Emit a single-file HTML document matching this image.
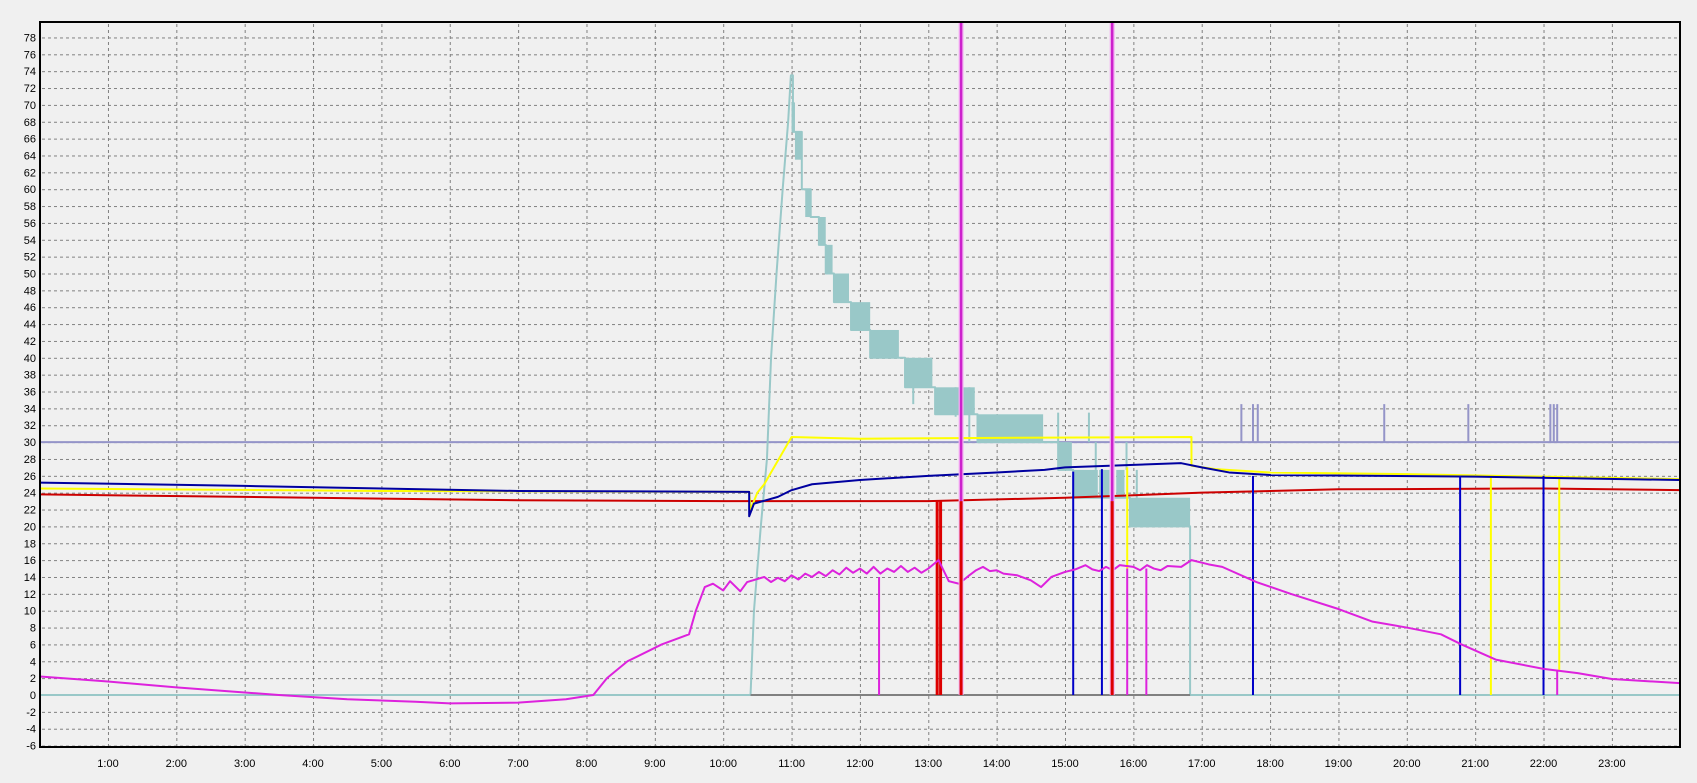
<!DOCTYPE html>
<html><head><meta charset="utf-8"><style>
html,body{margin:0;padding:0;background:#f0f0f0;}
svg{display:block;font-family:"Liberation Sans",sans-serif;font-size:11px;}
</style></head><body>
<svg width="1697" height="783" viewBox="0 0 1697 783" xmlns="http://www.w3.org/2000/svg">
<defs>
<pattern id="hg" x="0" y="695" width="1697" height="16.86" patternUnits="userSpaceOnUse">
<line x1="0" y1="0.5" x2="1697" y2="0.5" stroke="#808080" stroke-width="1" stroke-dasharray="3,3"/>
</pattern>
<pattern id="vg" x="39.6" y="0" width="68.36" height="783" patternUnits="userSpaceOnUse">
<line x1="0.5" y1="0" x2="0.5" y2="783" stroke="#808080" stroke-width="1" stroke-dasharray="3,3"/>
</pattern>
<clipPath id="cp"><rect x="40" y="22" width="1640" height="725"/></clipPath>
</defs>
<rect width="1697" height="783" fill="#f0f0f0"/>
<rect x="41" y="23" width="1638" height="723" fill="url(#hg)"/>
<rect x="41" y="23" width="1638" height="723" fill="url(#vg)"/>
<g clip-path="url(#cp)">
<g transform="translate(39.6 695) scale(68.36 -8.43)" fill="none" stroke-linejoin="round">
<path vector-effect="non-scaling-stroke" stroke="#9494c8" stroke-width="2" d="M0 30H24"/>
<path vector-effect="non-scaling-stroke" stroke="#9494c8" stroke-width="2" d="M17.58 30V34.5M17.75 30V34.5M17.82 30V34.5M19.67 30V34.5M20.9 30V34.5M22.1 30V34.5M22.15 30V34.5M22.2 30V34.5"/>
<path vector-effect="non-scaling-stroke" stroke="#99c8c8" stroke-width="2" d="M0 0H10.4L10.45 10L10.55 20L10.64 28L10.7 40L10.78 50L10.87 60L10.95 68L10.99 73.5H11.02V66.8H11.15V60H11.28V56.7H11.4V53.4H11.5V50H11.62V46.6H11.87V43.3H12.15V40H12.66V36.5H13.1V33.3H13.72V30H14.9V26.7H15.12V23.4H15.95V20H16.83V0H24"/>
<g fill="#99c8c8" stroke="none">
<rect x="11.0" y="66.8" width="0.05" height="3.5"/>
<rect x="11.05" y="63.5" width="0.1" height="3.3"/>
<rect x="11.2" y="56.7" width="0.08" height="3.3"/>
<rect x="11.4" y="53.4" width="0.1" height="3.3"/>
<rect x="11.5" y="50" width="0.1" height="3.4"/>
<rect x="11.62" y="46.6" width="0.22" height="3.4"/>
<rect x="11.87" y="43.3" width="0.28" height="3.3"/>
<rect x="12.15" y="40" width="0.42" height="3.3"/>
<rect x="12.66" y="36.5" width="0.4" height="3.5"/>
<rect x="13.1" y="33.3" width="0.58" height="3.2"/>
<rect x="13.72" y="30" width="0.96" height="3.3"/>
<rect x="14.9" y="26.7" width="0.2" height="3.3"/>
<rect x="15.12" y="23.4" width="0.36" height="3.3"/>
<rect x="15.5" y="23.4" width="0.15" height="3.3"/>
<rect x="15.75" y="23.4" width="0.12" height="3.3"/>
<rect x="15.95" y="20" width="0.88" height="3.4"/>
</g>
<path vector-effect="non-scaling-stroke" stroke="#99c8c8" stroke-width="2" d="M12.78 40V34.5M13.4 36.5V33M13.6 36.5V30M14.9 30V33.5M15.35 30V33.5M15.45 30V26.7M16.05 23.4V26.7M15.9 30V26.7"/>
<path vector-effect="non-scaling-stroke" stroke="#808080" stroke-width="2" d="M10.4 0H16.83"/>
<path vector-effect="non-scaling-stroke" stroke="#cc0000" stroke-width="2" d="M0 23.8L3 23.5L7 23.1L10 23L13 23L15 23.4L17 24L19 24.4L22 24.5L24 24.3"/>
<path vector-effect="non-scaling-stroke" stroke="#dd0000" stroke-width="3" d="M13.13 23V0M13.18 23V0M13.48 23V0M15.69 23V0"/>
<path vector-effect="non-scaling-stroke" stroke="#ffff00" stroke-width="2" d="M0 24.5L5 24.2L10.38 24.1L10.4 22L10.5 24L10.6 25L11 30.6L12 30.4L14 30.5L16.85 30.6V27.2L17.2 26.8L18 26.4L20 26.2L22 25.9L24 25.6"/>
<path vector-effect="non-scaling-stroke" stroke="#ffff00" stroke-width="2" d="M15.91 27V15M21.23 26V0M22.23 26V3"/>
<path vector-effect="non-scaling-stroke" stroke="#0000a0" stroke-width="2" d="M0 25.2L3 24.8L7 24.2L10.38 24.1V21.2L10.45 22.7L10.8 23.5L11 24.3L11.3 25L12 25.5L13 26L14 26.4L14.7 26.7L15 27L16 27.3L16.7 27.5L17 27L17.4 26.4L18 26.1L21 25.9L24 25.5"/>
<path vector-effect="non-scaling-stroke" stroke="#0000c8" stroke-width="2" d="M15.12 26.5V0M15.54 26.8V0M17.75 26V0M20.78 26V0M22.0 26V0"/>
<path vector-effect="non-scaling-stroke" stroke="#dd22dd" stroke-width="2" d="M0 2.2L1 1.6L2 0.9L3 0.3L3.5 0L4.5 -0.5L5.5 -0.8L6 -1L7 -0.9L7.7 -0.5L8.1 0L8.3 2L8.6 4L9.1 6L9.5 7.2L9.6 10L9.73 12.8L9.85 13.2L10 12.4L10.1 13.5L10.25 12.3L10.35 13.4L10.6 14L10.7 13.4L10.8 13.9L10.9 13.5L11 14.2L11.1 13.7L11.2 14.4L11.3 14L11.4 14.6L11.5 14.1L11.6 14.8L11.7 14.3L11.8 15.1L11.9 14.5L12 15L12.1 14.4L12.2 15.2L12.3 14.4L12.4 15L12.5 14.6L12.6 15.3L12.7 14.6L12.8 15.1L12.9 14.5L13 15L13.15 16L13.3 13.5L13.45 13.2L13.6 14.2L13.7 14.8L13.8 15.2L13.9 14.7L14 14.8L14.1 14.4L14.3 14.2L14.5 13.6L14.65 12.8L14.8 14L15 14.6L15.15 14.9L15.3 15.4L15.4 14.9L15.5 14.7L15.6 15.2L15.7 14.8L15.8 15.4L16 15.2L16.1 14.8L16.2 15.4L16.3 15L16.4 14.8L16.5 15.3L16.7 15.2L16.85 16L17.1 15.5L17.3 15.2L17.8 13.4L18.3 12L19 10.2L19.5 8.7L20 8L20.5 7.2L20.8 6L21.3 4.2L22 3.1L22.5 2.6L23 1.9L24 1.4"/>
<path vector-effect="non-scaling-stroke" stroke="#dd22dd" stroke-width="2" d="M12.28 14V0M15.91 15V0M16.19 15V0M22.2 3V0"/>
<path vector-effect="non-scaling-stroke" stroke="#f4b0f4" stroke-width="5" d="M13.48 80V0M15.69 80V0"/>
<path vector-effect="non-scaling-stroke" stroke="#cc22cc" stroke-width="2.5" d="M13.48 80V23M15.69 80V23"/>
<path vector-effect="non-scaling-stroke" stroke="#dd0000" stroke-width="3" d="M13.48 23V0M15.69 23V0"/>
</g>
</g>
<rect x="40" y="22" width="1640" height="725" fill="none" stroke="#000" stroke-width="2"/>
<g fill="#000" text-anchor="end">
<text x="36" y="41.5">78</text><text x="36" y="58.3">76</text><text x="36" y="75.2">74</text><text x="36" y="92">72</text><text x="36" y="108.9">70</text><text x="36" y="125.8">68</text><text x="36" y="142.6">66</text><text x="36" y="159.5">64</text><text x="36" y="176.3">62</text><text x="36" y="193.2">60</text><text x="36" y="210.1">58</text><text x="36" y="226.9">56</text><text x="36" y="243.8">54</text><text x="36" y="260.6">52</text><text x="36" y="277.5">50</text><text x="36" y="294.4">48</text><text x="36" y="311.2">46</text><text x="36" y="328.1">44</text><text x="36" y="344.9">42</text><text x="36" y="361.8">40</text><text x="36" y="378.7">38</text><text x="36" y="395.5">36</text><text x="36" y="412.4">34</text><text x="36" y="429.2">32</text><text x="36" y="446.1">30</text><text x="36" y="463">28</text><text x="36" y="479.8">26</text><text x="36" y="496.7">24</text><text x="36" y="513.5">22</text><text x="36" y="530.4">20</text><text x="36" y="547.3">18</text><text x="36" y="564.1">16</text><text x="36" y="581">14</text><text x="36" y="597.8">12</text><text x="36" y="614.7">10</text><text x="36" y="631.6">8</text><text x="36" y="648.4">6</text><text x="36" y="665.3">4</text><text x="36" y="682.1">2</text><text x="36" y="699">0</text><text x="36" y="715.9">-2</text><text x="36" y="732.7">-4</text><text x="36" y="749.6">-6</text>
</g>
<g fill="#000" text-anchor="middle">
<text x="108" y="767">1:00</text><text x="176.3" y="767">2:00</text><text x="244.7" y="767">3:00</text><text x="313" y="767">4:00</text><text x="381.4" y="767">5:00</text><text x="449.8" y="767">6:00</text><text x="518.1" y="767">7:00</text><text x="586.5" y="767">8:00</text><text x="654.8" y="767">9:00</text><text x="723.2" y="767">10:00</text><text x="791.6" y="767">11:00</text><text x="859.9" y="767">12:00</text><text x="928.3" y="767">13:00</text><text x="996.6" y="767">14:00</text><text x="1065" y="767">15:00</text><text x="1133.4" y="767">16:00</text><text x="1201.7" y="767">17:00</text><text x="1270.1" y="767">18:00</text><text x="1338.4" y="767">19:00</text><text x="1406.8" y="767">20:00</text><text x="1475.2" y="767">21:00</text><text x="1543.5" y="767">22:00</text><text x="1611.9" y="767">23:00</text>
</g>
</svg>
</body></html>
